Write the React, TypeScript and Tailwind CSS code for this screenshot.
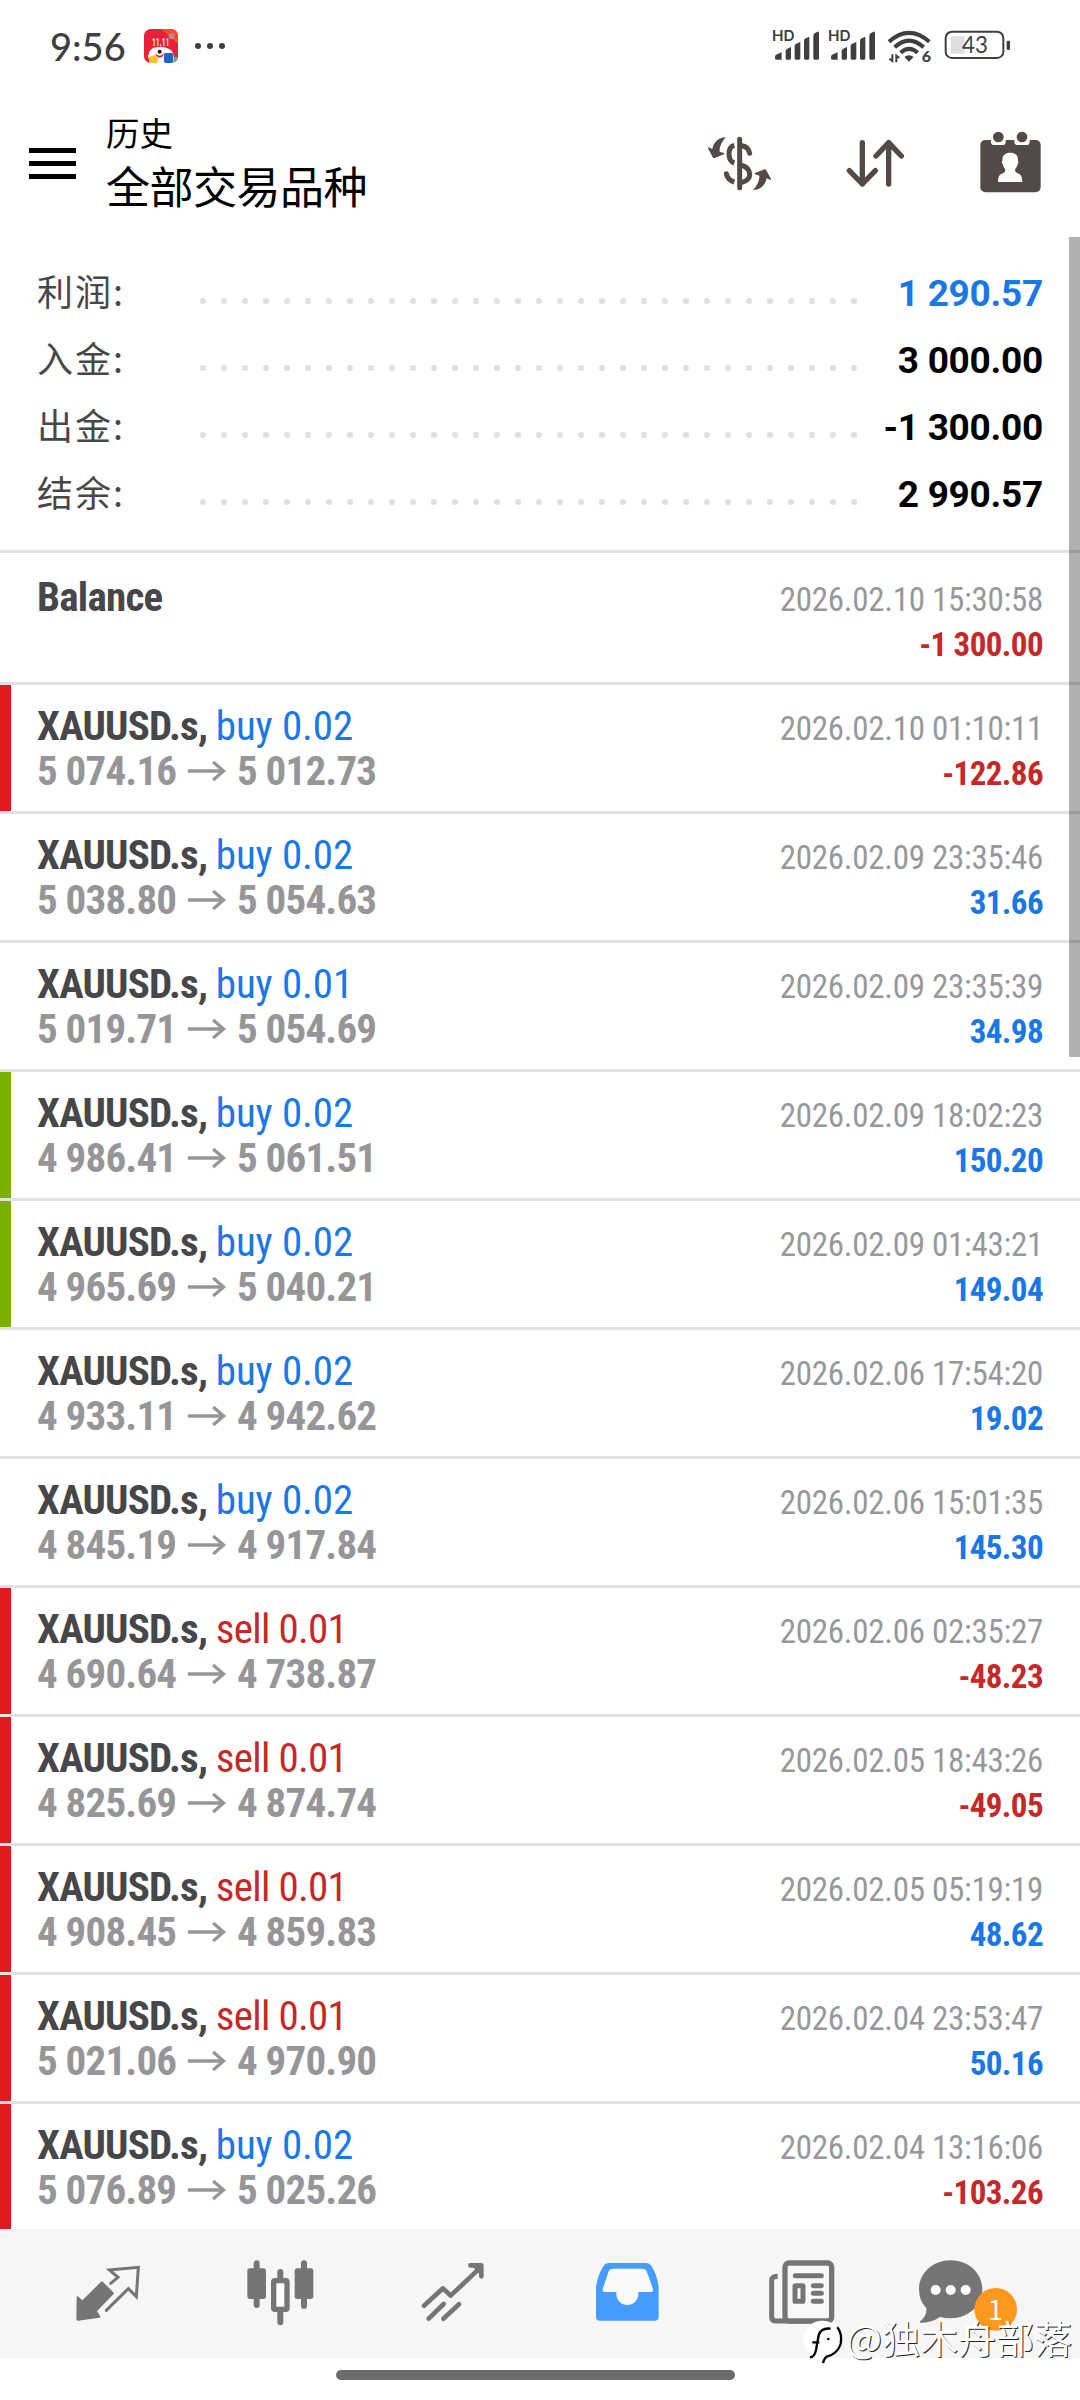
import React from 'react';

type Side = 'buy' | 'sell';

interface Deal {
  side: Side;
  volume: string;
  open: string;
  close: string;
  time: string;
  profit: string;
  mark?: 'sl' | 'tp';
}

const summary = [
  { label: '利润:', value: '1 290.57', color: 'text-[#1a78e6]' },
  { label: '入金:', value: '3 000.00', color: 'text-black' },
  { label: '出金:', value: '-1 300.00', color: 'text-black' },
  { label: '结余:', value: '2 990.57', color: 'text-black' },
];

const deals: Deal[] = [
  { side: 'buy', volume: '0.02', open: '5 074.16', close: '5 012.73', time: '2026.02.10 01:10:11', profit: '-122.86', mark: 'sl' },
  { side: 'buy', volume: '0.02', open: '5 038.80', close: '5 054.63', time: '2026.02.09 23:35:46', profit: '31.66' },
  { side: 'buy', volume: '0.01', open: '5 019.71', close: '5 054.69', time: '2026.02.09 23:35:39', profit: '34.98' },
  { side: 'buy', volume: '0.02', open: '4 986.41', close: '5 061.51', time: '2026.02.09 18:02:23', profit: '150.20', mark: 'tp' },
  { side: 'buy', volume: '0.02', open: '4 965.69', close: '5 040.21', time: '2026.02.09 01:43:21', profit: '149.04', mark: 'tp' },
  { side: 'buy', volume: '0.02', open: '4 933.11', close: '4 942.62', time: '2026.02.06 17:54:20', profit: '19.02' },
  { side: 'buy', volume: '0.02', open: '4 845.19', close: '4 917.84', time: '2026.02.06 15:01:35', profit: '145.30' },
  { side: 'sell', volume: '0.01', open: '4 690.64', close: '4 738.87', time: '2026.02.06 02:35:27', profit: '-48.23', mark: 'sl' },
  { side: 'sell', volume: '0.01', open: '4 825.69', close: '4 874.74', time: '2026.02.05 18:43:26', profit: '-49.05', mark: 'sl' },
  { side: 'sell', volume: '0.01', open: '4 908.45', close: '4 859.83', time: '2026.02.05 05:19:19', profit: '48.62', mark: 'sl' },
  { side: 'sell', volume: '0.01', open: '5 021.06', close: '4 970.90', time: '2026.02.04 23:53:47', profit: '50.16', mark: 'sl' },
  { side: 'buy', volume: '0.02', open: '5 076.89', close: '5 025.26', time: '2026.02.04 13:16:06', profit: '-103.26', mark: 'sl' },
];

const Signal = () => (
  <svg className="h-[32px] w-[48px] overflow-visible" viewBox="276 88 144 96" fill="#3f3f3f">
    <text x="276" y="125" fontSize="44" fontWeight="600" fontFamily="Inter, sans-serif" textLength="68" lengthAdjust="spacingAndGlyphs">HD</text>
    <path d="M285 172q0-6 6-8l14-6v22h-16q-4 0-4-4z" />
    <path d="M317 155q0-6 5-8l11-5v34q0 4-4 4h-8q-4 0-4-4z" />
    <path d="M344 140q0-6 5-8l12-5v49q0 4-4 4h-9q-4 0-4-4z" />
    <path d="M372 124q0-6 5-8l11-5v65q0 4-4 4h-8q-4 0-4-4z" />
    <path d="M400 108q0-6 5-8l8-4q4-1 4 4v76q0 4-4 4h-9q-4 0-4-4z" />
  </svg>
);

const Wifi = () => (
  <svg className="h-[35px] w-[44px] overflow-visible" viewBox="620 86 132 105" fill="none" stroke="#3f3f3f" strokeWidth="12">
    <path d="M626 124Q686 71 747 124" />
    <path d="M643 141Q686 101 730 141" />
    <path d="M661 157Q686 134 712 157" />
    <path d="M672 170q14-10 28 0l-14 14z" fill="#3f3f3f" stroke="none" />
    <path d="M636 162v20l-9-7M648 186v-20l9 7" strokeWidth="6" />
    <text x="724" y="186" fontSize="44" fontWeight="900" fontFamily="Lato, sans-serif" fill="#3f3f3f" stroke="none" textLength="28" lengthAdjust="spacingAndGlyphs">6</text>
  </svg>
);

const Battery = () => (
  <svg className="h-[32px] w-[67px]" viewBox="792 88 201 96">
    <rect x="812" y="110" width="42" height="52" rx="6" fill="#dedede" />
    <rect x="797" y="96" width="173" height="79" rx="19" fill="none" stroke="#3f3f3f" strokeWidth="6" />
    <rect x="980" y="123" width="10" height="28" rx="4" fill="#3f3f3f" />
    <text x="885" y="160" textAnchor="middle" fontSize="67" fontFamily="Lato, sans-serif" fill="#3f3f3f">43</text>
  </svg>
);

const AppBadge = () => (
  <svg className="h-[34px] w-[34px] overflow-visible" viewBox="0 0 102 102">
    <clipPath id="app">
      <rect width="102" height="102" rx="20" />
    </clipPath>
    <g clipPath="url(#app)">
      <rect width="102" height="102" fill="#e8203a" />
      <path d="M52 0h50v45z" fill="#f0522e" />
      <circle cx="83" cy="22" r="9" fill="#b98a96" />
      <path d="M12 82q4-26 24-27 16-4 32 2 18 4 22 25v20H18z" fill="#fff" />
      <circle cx="47" cy="68" r="6" fill="#231a1a" />
      <path d="M34 72q13 16 26 0-2 14-13 14t-13-14z" fill="#d8342c" />
      <path d="M14 84l18-6 10 12-2 12H16z" fill="#fbc02c" />
      <rect x="60" y="72" width="28" height="30" rx="5" fill="#2462c8" />
      <path d="M90 84h12v18H90z" fill="#63b06a" />
    </g>
    <text x="24" y="52" fontSize="34" fontWeight="700" fontFamily="Roboto, sans-serif" fill="#ffe9e0" textLength="52" lengthAdjust="spacingAndGlyphs">11.11</text>
  </svg>
);

const StatusBar = () => (
  <div className="flex h-[92px] items-start pl-[50px] pr-[69px] pt-[29px]">
    <div className="w-[94px] font-['Lato'] text-[38px] font-medium leading-[34px] text-[#3f3f3f]">9:56</div>
    <AppBadge />
    <div className="ml-[17px] mt-[14px] flex gap-[6px]">
      <span className="h-[6px] w-[6px] rounded-full bg-[#3f3f3f]" />
      <span className="h-[6px] w-[6px] rounded-full bg-[#3f3f3f]" />
      <span className="h-[6px] w-[6px] rounded-full bg-[#3f3f3f]" />
    </div>
    <div className="ml-auto flex items-start">
      <Signal />
      <div className="w-2" />
      <Signal />
      <div className="w-[11px]" />
      <Wifi />
      <div className="w-[13px]" />
      <Battery />
    </div>
  </div>
);

const Header = () => (
  <header className="flex h-[144px] items-start pl-[29px] pr-[37px]">
    <div className="mt-[56px] flex w-[47px] flex-col gap-[8px]">
      <span className="h-[5px] bg-black" />
      <span className="h-[5px] bg-black" />
      <span className="h-[5px] bg-black" />
    </div>
    <div className="ml-[30px] mt-[12px] font-['Noto_Sans_CJK_SC'] text-black">
      <div className="text-[33.5px] leading-[55px]">历史</div>
      <div className="text-[44px] leading-[53px] tracking-[-0.5px]">全部交易品种</div>
    </div>
    <div className="ml-auto flex items-start">
      {/* Currency exchange */}
      <svg className="mt-[40px] h-[61px] w-[70px]" viewBox="75 396 210 183" fill="none" stroke="#534a48" strokeWidth="15">
        <path d="M179 418V563" strokeLinecap="round" />
        <path d="M163 436Q147 440 147 462T163 489M139 521Q143 540 163 546" />
        <path d="M186 437Q205 440 209 460M186 496C216 506 218 540 186 547" strokeLinecap="round" />
        <circle cx="139" cy="521" r="7.5" fill="#534a48" stroke="none" />
        <g fill="#534a48" stroke="none">
          <path d="M138 412C118 412 101 425 97 447L86 442Q84 442 84 445L99 473Q101 475 104 474L132 463Q134 461 132 459L119 455C118 440 126 424 138 412Z" />
          <path transform="rotate(180 178.5 491)" d="M138 412C118 412 101 425 97 447L86 442Q84 442 84 445L99 473Q101 475 104 474L132 463Q134 461 132 459L119 455C118 440 126 424 138 412Z" />
        </g>
      </svg>
      {/* Sort */}
      <svg className="ml-[70px] mt-[45px] h-[53px] w-[62px]" viewBox="495 411 186 159" fill="none" stroke="#534a48" strokeWidth="16" strokeLinecap="round" strokeLinejoin="round">
        <path d="M547 428V552M508 512L547 552L586 512" />
        <path d="M626 552V428M588 468L626 428L664 468" />
      </svg>
      {/* Calendar */}
      <svg className="ml-[71px] mt-[38px] h-[64px] w-[65px]" viewBox="894 390 195 192" fill="#534a48">
        <rect x="901" y="420" width="181" height="157" rx="15" />
        <path d="M933 416h44v9q0 10-10 10h-24q-10 0-10-10zM1003 416h46v9q0 10-10 10h-26q-10 0-10-10z" fill="#fff" />
        <circle cx="955" cy="411" r="16" />
        <circle cx="1026" cy="411" r="16" />
        <path d="M991 458c16 0 24 8 23 26q3 4-1 9c-2 8-6 12-8 16q0 7 6 10c10 4 16 8 16 27h-73c0-19 6-23 16-27q6-3 6-10c-2-4-6-8-8-16q-4-5-1-9c-1-18 8-26 24-26z" fill="#fff" />
      </svg>
    </div>
  </header>
);

const Summary = () => (
  <section className="border-b-[3px] border-[#e2e2e2] pb-[22px] pt-6">
    {summary.map(row => (
      <div key={row.label} className="flex h-[67px] pl-[37px] pr-[37px]">
        <span className="w-[163px] font-['Noto_Sans_CJK_SC'] text-[36px] leading-[61px] tracking-[2px] text-[#47474a]">{row.label}</span>
        <span className="mt-[38px] flex gap-[15px]">
          {Array.from({ length: 32 }, (_, i) => (
            <span key={i} className="h-[6px] w-[6px] rounded-full bg-[#e0e0e0]" />
          ))}
        </span>
        <span className={`ml-auto font-['Roboto'] text-[37px] font-bold leading-[67px] tracking-[-0.25px] ${row.color}`}>{row.value}</span>
      </div>
    ))}
  </section>
);

const BalanceRow = () => (
  <div className="flex h-[132px] justify-between border-b-[3px] border-[#e2e2e2] pl-[37px] pr-[37px] pt-[3px] font-['Roboto_Condensed']">
    <div className="pt-[19px] text-[41px] font-bold leading-[45px] tracking-[-0.75px] text-[#47474a]">Balance</div>
    <div className="pt-[21px] text-right text-[33px] leading-[45px]">
      <div className="tracking-[-0.27px] text-[#98989a]">2026.02.10 15:30:58</div>
      <div className="font-bold tracking-[-0.6px] text-[#c62828]">-1 300.00</div>
    </div>
  </div>
);

const DealRow = ({ deal }: { deal: Deal }) => (
  <div className="flex h-[129px] border-b-[3px] border-[#e2e2e2] pr-[37px] font-['Roboto_Condensed']">
    <div className={`w-[11px] ${deal.mark === 'sl' ? 'bg-[#e01b20]' : deal.mark === 'tp' ? 'bg-[#7cb000]' : ''}`} />
    <div className="ml-[26px] whitespace-nowrap pt-[19px] text-[41px] leading-[45px]">
      <div>
        <span className="font-bold tracking-[-0.8px] text-[#47474a]">XAUUSD.s, </span>
        <span className={deal.side === 'buy' ? 'tracking-[-0.1px] text-[#1a78e6]' : 'tracking-[-0.7px] text-[#c62828]'}>{deal.side} {deal.volume}</span>
      </div>
      <div className="flex items-center font-bold tracking-[-0.8px] text-[#969698]">
        <span className="w-[149px]">{deal.open}</span>
        <svg className="mb-[1px] h-[22px] w-[41px]" viewBox="560 655 122 66" fill="none" stroke="#969698" strokeWidth="10">
          <path d="M565 688H674M641 661L672 688L641 715" />
        </svg>
        <span className="ml-[10px]">{deal.close}</span>
      </div>
    </div>
    <div className="ml-auto pt-[21px] text-right text-[33px] leading-[45px]">
      <div className="tracking-[-0.27px] text-[#98989a]">{deal.time}</div>
      <div className={`font-bold tracking-[-0.6px] ${deal.profit.startsWith('-') ? 'text-[#c62828]' : 'text-[#1a78e6]'}`}>{deal.profit}</div>
    </div>
  </div>
);

const NavItem = ({ viewBox, children }: { viewBox: string; children: React.ReactNode }) => (
  <div className="flex flex-1 justify-center">
    <svg className="h-[129px] w-[110px]" viewBox={viewBox} fill="none" stroke="#757575" strokeLinecap="round" strokeLinejoin="round">
      {children}
    </svg>
  </div>
);

const BottomNav = () => (
  <nav className="flex h-[129px] shrink-0 bg-[#f6f6f6] px-5">
    {/* Quotes */}
    <NavItem viewBox="125 27 330 387">
      <path d="M275 187L308 220L256 273L267 290L203 299Q201 299 201 296L202 232L216 245Z" fill="#757575" strokeWidth="6" />
      <path d="M301 190L323 172L297 150L384 142L378 230L354 206L288 271" strokeWidth="9" strokeLinejoin="miter" />
    </NavItem>
    {/* Chart */}
    <NavItem viewBox="645 27 330 387">
      <path d="M740 130V255M882 130V258M811 156V180M811 275V307" strokeWidth="18" />
      <rect x="712" y="145" width="56" height="92" rx="8" fill="#757575" stroke="none" />
      <rect x="854" y="145" width="56" height="92" rx="8" fill="#757575" stroke="none" />
      <rect x="791" y="182" width="40" height="86" rx="4" fill="#fff" strokeWidth="16" />
    </NavItem>
    {/* Trade */}
    <NavItem viewBox="25 27 330 387">
      <path d="M103 257L160 205L183 227L272 143M242 136H275V169" strokeWidth="14" />
      <path d="M252 140H275V163Z" fill="#757575" strokeWidth="6" />
      <path d="M117 296L162 252M161 296L208 253" strokeWidth="14" />
    </NavItem>
    {/* History */}
    <NavItem viewBox="545 27 330 387">
      <path d="M654 129H768Q777 129 783 137Q800 163 805 200V290Q805 302 793 302H629Q617 302 617 290V200Q622 165 640 137Q645 129 654 129Z" fill="#449cff" stroke="none" />
      <path d="M666 146H757Q766 146 769 154L788 207Q790 216 782 216H744V222A33 33 0 0 1 678 222V216H643Q635 216 637 207L655 154Q658 146 666 146Z" fill="#f9f9f9" stroke="none" />
    </NavItem>
    {/* News */}
    <NavItem viewBox="75 27 330 387">
      <path d="M173 169Q155 169 155 182V290Q155 303 168 303H330" strokeWidth="15" strokeLinecap="butt" />
      <rect x="195" y="129" width="140" height="174" rx="12" fill="#f9f9f9" strokeWidth="16" />
      <path d="M226 167H304M280 197H304M280 220H304M280 244H304" strokeWidth="15" />
      <rect x="225" y="197" width="24" height="47" rx="2" strokeWidth="15" />
    </NavItem>
    {/* Messages */}
    <NavItem viewBox="595 27 330 387">
      <path d="M693 121C747 121 788 160 788 208S747 295 693 295Q676 295 661 291Q632 310 603 308Q598 307 602 303Q622 288 620 265Q598 242 598 208C598 160 639 121 693 121Z" fill="#757575" stroke="none" />
      <circle cx="648" cy="210" r="15" fill="#fff" stroke="none" />
      <circle cx="693" cy="210" r="15" fill="#fff" stroke="none" />
      <circle cx="738" cy="210" r="15" fill="#fff" stroke="none" />
      <circle cx="828" cy="268" r="64" fill="#ff981f" stroke="none" />
      <text x="827" y="299" textAnchor="middle" fontSize="83" fontFamily="'Noto Sans CJK SC', sans-serif" fill="#fff" stroke="none">1</text>
    </NavItem>
  </nav>
);

const Watermark = () => (
  <div className="absolute right-[8px] top-[2310px] flex items-start">
    <svg className="mr-[2px] mt-[9px] h-[46px] w-[41px]" viewBox="243 297 123 138" fill="none" stroke="#000" strokeWidth="7">
      <circle cx="301" cy="359" r="57" fill="#fff" stroke="none" />
      <path d="M264 412Q277 412 282 390L290 346Q297 322 326 326M271 367H292" />
      <path d="M346 322Q362 342 356 372Q346 402 316 409Q307 413 303 429" />
      <circle cx="319" cy="357" r="4" fill="#000" stroke="none" />
    </svg>
    <span className="font-['Noto_Sans_CJK_SC'] text-[38px] leading-[54px] text-white [text-shadow:1px_1px_0_#222]">@独木舟部落</span>
  </div>
);

export default function App() {
  return (
    <div className="relative flex h-[2400px] w-[1080px] flex-col overflow-hidden bg-white">
      <StatusBar />
      <Header />
      <main className="h-[1993px] shrink-0 overflow-hidden">
        <Summary />
        <BalanceRow />
        {deals.map(deal => (
          <DealRow key={deal.time} deal={deal} />
        ))}
      </main>
      <BottomNav />
      <div className="ml-[336px] mt-[12px] h-[10px] w-[399px] rounded-full bg-[#6b6b6b]" />

      {/* Scroll thumb */}
      <div className="absolute right-0 top-[237px] h-[820px] w-[11px] bg-black/31" />
      <Watermark />
    </div>
  );
}
